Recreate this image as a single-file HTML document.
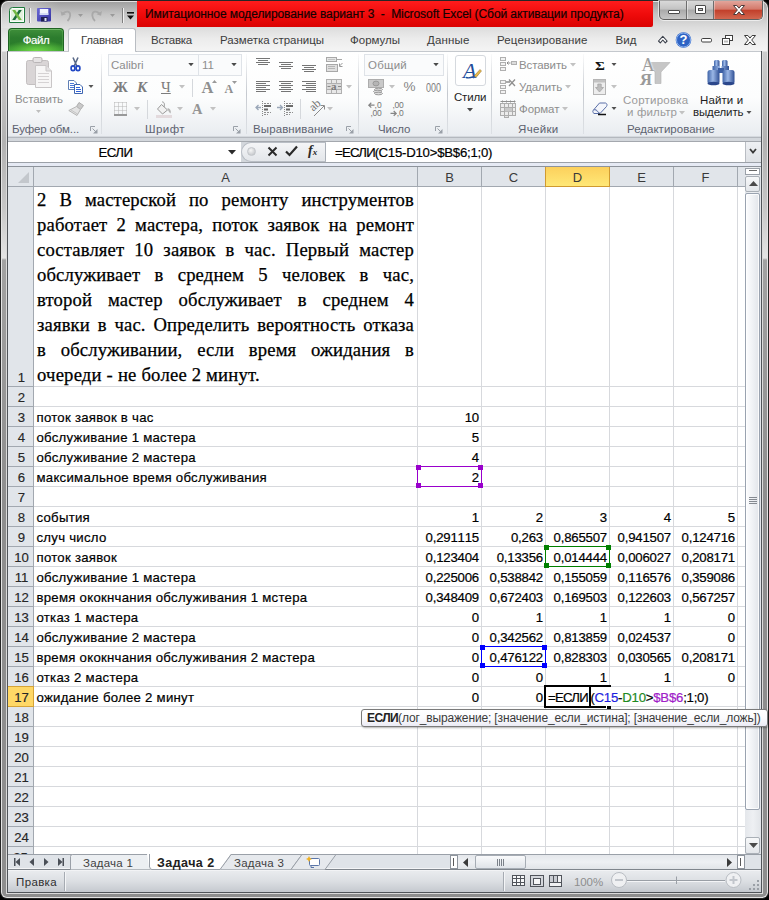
<!DOCTYPE html><html><head><meta charset="utf-8"><title>Excel</title><style>*{box-sizing:border-box;margin:0;padding:0}
html,body{width:769px;height:900px;overflow:hidden;background:#000}
body{position:relative;font-family:"Liberation Sans",sans-serif;font-size:12px;color:#1e1e1e}
.a{position:absolute}
.t{position:absolute;white-space:nowrap;line-height:14px}
svg{position:absolute;overflow:visible}
#red{left:137px;top:1px;width:516px;height:26px;border-radius:0 0 2px 0;background:linear-gradient(180deg,#ff1c1c 0,#ee0a0a 55%,#da0202 100%)}
#ribbon{left:8px;top:51px;width:753px;height:86px;background:linear-gradient(180deg,#ffffff 0,#fcfdfd 55%,#e9ecf0 100%);border-bottom:1px solid #d5d9de}
.tab{top:33px;font-size:11.500px;color:#3c3c3c}
.gl{top:122px;font-size:11.500px;color:#5d6270;text-align:center}
.gs{top:54px;width:1px;height:80px;background:linear-gradient(180deg,rgba(200,204,210,.1),#c5c9cf 50%,rgba(200,204,210,.4))}
.dis{color:#8d8d8d}

#win{left:0;top:0;width:769px;height:899px;border-radius:8px 8px 7px 7px;background:#262626;overflow:hidden}
#f1{left:1px;top:1px;width:767px;height:897px;border-radius:7px 7px 6px 6px;background:#e4e4e4}
#f2{left:2px;top:2px;width:765px;height:895px;border-radius:6px 6px 5px 5px;background:linear-gradient(180deg,#a0a0a0 0,#c4c4c4 12px,#dcdcdc 25px,#ececec 37px,#f4f4f4 49px,#cdcdcd 50px,#b2b2b2 140px,#c6c6c6 205px,#e4e4e4 256px,#a2a2a2 258px,#8e8e8e 500px,#8e8e8e 100%)}
#f3{left:6px;top:52px;width:757px;height:842px;background:#dadada}
#f4{left:7px;top:51px;width:755px;height:842px;background:#505459}
#title{left:2px;top:2px;width:765px;height:26px;border-radius:6px 6px 0 0;background:transparent}
#tabs{left:8px;top:28px;width:753px;height:23px;background:transparent}

#fbar{left:8px;top:137px;width:753px;height:30px;background:#d3d7dc}
.hdr{background:#e1e5ea}
.ct{position:absolute;white-space:nowrap;font-size:13.2px;line-height:20px;height:20px;color:#000;-webkit-text-stroke-width:.2px}
.cl{left:36.500px;letter-spacing:.26px}
.cr{text-align:right;letter-spacing:-.2px;font-kerning:none}
.rh{position:absolute;left:9px;width:25px;text-align:center;font-size:13.2px;line-height:20px;color:#262626;-webkit-text-stroke-width:.15px}
.chd{position:absolute;top:168px;height:19px;line-height:19px;text-align:center;font-size:13px;color:#3a3a3a}
.gv{position:absolute;top:187px;width:1px;height:667px;background:#d7d9dd}
.gh{position:absolute;left:34px;width:711px;height:1px;background:#d7d9dd}
#a1{position:absolute;left:37px;top:187px;width:377px;font:18.67px/25px "Liberation Serif",serif;color:#000;text-align:justify;-webkit-text-stroke-width:.25px}
#a1 div{text-align:justify;text-align-last:justify;white-space:nowrap;height:25px;letter-spacing:.14px}
</style></head><body><div id="win" class="a"><div id="f1" class="a"></div><div id="f2" class="a"></div><div id="f3" class="a"></div><div id="f4" class="a"></div><div id="title" class="a"></div>
<div class="a" style="left:1px;top:1px;width:60px;height:27px;border-radius:7px 0 0 0;background:linear-gradient(90deg,rgba(255,255,255,.12),rgba(255,255,255,.3) 30%,rgba(255,255,255,0))"></div>
<!-- excel icon -->
<svg style="left:9px;top:7px" width="16" height="16" viewBox="0 0 16 16"><path d="M3.500 .5 H15.500 V15.500 H.5 V3.500 Q.5 .5 3.500 .5Z" fill="#fbfefb" stroke="#1f7a3c"/><rect x="2" y="2" width="12" height="12" fill="#e3f2de"/><path d="M9.800 3 L12.800 3 L6.200 13 L3.200 13 Z" fill="#1c6b3a"/><path d="M3.200 3 L6.200 3 L12.800 13 L9.800 13 Z" fill="#74b843"/></svg>
<div class="a" style="left:29px;top:8px;width:1px;height:15px;background:#8f8f8f"></div><div class="a" style="left:30px;top:8px;width:1px;height:15px;background:#f4f4f4"></div>
<!-- save -->
<svg style="left:37px;top:8px" width="14" height="14" viewBox="0 0 14 14"><defs><linearGradient id="sv" x1="0" x2="1" y1="0" y2="1"><stop offset="0" stop-color="#6c6ad6"/><stop offset="1" stop-color="#3432a0"/></linearGradient></defs><rect x="0" y="0" width="14" height="13.500" rx="1" fill="url(#sv)"/><rect x="2.800" y="1" width="8.500" height="6" fill="#f2f5fd"/><rect x="2.800" y="5" width="8.500" height="2" fill="#d5dcf6"/><rect x="4" y="9" width="6.500" height="4.500" fill="#1e1e52"/><rect x="7.500" y="10" width="2" height="3" fill="#dfe2f2"/></svg>
<!-- undo redo -->
<svg style="left:60px;top:7px" width="60" height="16" viewBox="0 0 60 16" fill="none" stroke="#a9a9a9" stroke-width="1.8"><path d="M3 6.5 C6 3.5 10.5 4 10.2 8.5 C10 11 9 12.5 7.5 14"/><path d="M0.5 4 L1.5 8.8 L6 7.2 Z" fill="#a9a9a9" stroke="none"/><path d="M18 7 h5 l-2.5 3z" fill="#9a9a9a" stroke="none"/><path d="M39.5 6.5 C36.5 3.5 32 4 32.3 8.5 C32.5 11 33.5 12.5 35 14"/><path d="M42 4 L41 8.8 L36.5 7.2 Z" fill="#a9a9a9" stroke="none"/><path d="M50 7 h5 l-2.5 3z" fill="#9a9a9a" stroke="none"/></svg>
<div class="a" style="left:122px;top:8px;width:1px;height:15px;background:#7f7f7f"></div><div class="a" style="left:123px;top:8px;width:1px;height:15px;background:#f0f0f0"></div>
<svg style="left:127px;top:12px" width="8" height="9" viewBox="0 0 8 9"><rect x="0" y="0" width="7" height="1.6" fill="#111"/><path d="M0 3.5 h7 l-3.5 4z" fill="#111"/></svg>
<div id="red" class="a"></div>
<div class="t" style="left:145px;top:7px;font-size:12px;color:#140202;letter-spacing:-.08px;-webkit-text-stroke-width:.2px">Имитационное моделирование вариант 3 &nbsp;- &nbsp;Microsoft Excel (Сбой активации продукта)</div>
<!-- window controls -->
<div class="a" style="left:659px;top:1px;width:104px;height:19px;border:1px solid #5f5f5f;border-top:none;border-radius:0 0 5px 5px;background:linear-gradient(180deg,#d9d9d9 0,#c3c3c3 45%,#a9a9a9 50%,#c6c6c6 100%);box-shadow:0 0 0 1px rgba(255,255,255,.6)"></div>
<div class="a" style="left:714px;top:1px;width:48px;height:18px;border-radius:0 0 4px 0;background:linear-gradient(180deg,#e2a59b 0,#d4796b 45%,#c2402b 52%,#d2674f 100%)"></div>
<div class="a" style="left:686px;top:1px;width:1px;height:18px;background:#6d6d6d"></div><div class="a" style="left:687px;top:1px;width:1px;height:18px;background:rgba(255,255,255,.45)"></div>
<div class="a" style="left:713px;top:1px;width:1px;height:18px;background:#6d6d6d"></div><div class="a" style="left:714px;top:1px;width:1px;height:18px;background:rgba(255,255,255,.35)"></div>
<svg style="left:659px;top:0" width="104" height="20" viewBox="0 0 104 20"><rect x="9.5" y="10.5" width="11" height="3" rx=".5" fill="#fff" stroke="#4a4a4a"/><rect x="36.500" y="5.500" width="10" height="8" rx=".5" fill="#fff" stroke="#4a4a4a"/><rect x="39.500" y="8.500" width="4" height="2" fill="#c3c3c3" stroke="#4a4a4a"/><path d="M74.500 5.500 h3.300 l2.200 2.700 l2.200 -2.700 h3.300 l-3.900 4.500 l3.900 4.500 h-3.300 l-2.200 -2.700 l-2.200 2.700 h-3.300 l3.900 -4.500z" fill="#fff" stroke="#4a3a3a" stroke-width="1"/></svg>
<!-- tabs row -->
<div id="tabs" class="a"></div>
<div class="a" style="left:8px;top:28px;width:56px;height:23px;border-radius:4px 4px 0 0;background:radial-gradient(ellipse 34px 11px at 50% 100%,rgba(120,225,75,.9),rgba(120,225,75,0)),linear-gradient(180deg,#3f8f3a 0,#2c7c2e 40%,#2a7d2a 70%,#35962f 100%);border:1px solid #1f6422;border-bottom:none;box-shadow:inset 0 1px 0 rgba(150,215,140,.55),inset 1px 0 0 rgba(110,190,100,.35),inset -1px 0 0 rgba(110,190,100,.35)"></div>
<div class="t" style="left:8px;top:33px;width:56px;text-align:center;color:#fff;font-size:11.500px;letter-spacing:-.5px;text-shadow:0 0 1px rgba(255,255,255,.5)">Файл</div>
<div class="a" style="left:68px;top:28px;width:68px;height:24px;border:1px solid #b9bdc2;border-bottom:none;border-radius:3px 3px 0 0;background:#fff"></div>
<div class="t tab" style="left:81px;letter-spacing:-0.25px">Главная</div>
<div class="t tab" style="left:151px;letter-spacing:-0.25px">Вставка</div>
<div class="t tab" style="left:220px;letter-spacing:-0.02px">Разметка страницы</div>
<div class="t tab" style="left:350px;letter-spacing:0px">Формулы</div>
<div class="t tab" style="left:427px;letter-spacing:0.16px">Данные</div>
<div class="t tab" style="left:497px;letter-spacing:0.12px">Рецензирование</div>
<div class="t tab" style="left:615.500px;letter-spacing:0.06px">Вид</div>
<svg style="left:657px;top:32px" width="100" height="16" viewBox="0 0 100 16"><path d="M1.500 9 L5.800 4.300 L10.100 9 L8.300 10.800 L5.800 8 L3.300 10.800 Z" fill="#fff" stroke="#3a3f4a" stroke-width="1.100" stroke-linejoin="round"/><circle cx="26.500" cy="8" r="7.800" fill="#2e63c4"/><circle cx="26.500" cy="8" r="7" fill="none" stroke="#8db2ee" stroke-width="1"/><rect x="44.500" y="6.500" width="10" height="3.500" rx="1.200" fill="#fff" stroke="#3f3f3f"/><rect x="68.500" y="3.500" width="7" height="5" fill="#fff" stroke="#3f3f3f"/><rect x="65.500" y="6.500" width="7" height="6" fill="#fff" stroke="#3f3f3f"/><rect x="67" y="8.500" width="4" height="2" fill="#bbb"/><path d="M87.500 3.500 h3.400 l2.100 2.600 l2.100 -2.600 h3.400 l-3.800 4.500 l3.800 4.500 h-3.400 l-2.100 -2.600 l-2.100 2.600 h-3.400 l3.800 -4.500z" fill="#fff" stroke="#3a3a3a" stroke-width="1"/></svg>
<div class="t" style="left:679px;top:32px;width:9px;text-align:center;color:#fff;font-weight:bold;font-size:13px;line-height:16px">?</div>
<div id="ribbon" class="a"></div>
<div class="a" style="left:8px;top:51px;width:753px;height:1px;background:#c4c8cd"></div>
<div class="a" style="left:136px;top:51px;width:1px;height:1px;background:#b9bdc2"></div>
<div class="a" style="left:69px;top:51px;width:66px;height:1px;background:#fff"></div>
<!-- group separators -->
<div class="a gs" style="left:101px"></div><div class="a gs" style="left:246px"></div><div class="a gs" style="left:358px"></div><div class="a gs" style="left:447px"></div><div class="a gs" style="left:491px"></div><div class="a gs" style="left:583px"></div>
<!-- group labels -->
<div class="t gl" style="letter-spacing:-0.13px;left:12px">Буфер обм...</div>
<div class="t gl" style="letter-spacing:0.43px;left:145px">Шрифт</div>
<div class="t gl" style="left:253px;letter-spacing:0.1px">Выравнивание</div>
<div class="t gl" style="letter-spacing:-0.18px;left:378px">Число</div>
<div class="t gl" style="letter-spacing:0.34px;left:518px">Ячейки</div>
<div class="t gl" style="left:627px;letter-spacing:0.01px">Редактирование</div>
<!-- dialog launchers -->
<svg style="left:90px;top:126px" width="8" height="8" viewBox="0 0 8 8"><path d="M.5 5 V.5 H5" fill="none" stroke="#9aa0a8"/><path d="M3 7.500 H7.500 V3 Z" fill="#9aa0a8"/><path d="M2.500 2.500 L6 6" stroke="#9aa0a8"/></svg>
<svg style="left:233px;top:126px" width="8" height="8" viewBox="0 0 8 8"><path d="M.5 5 V.5 H5" fill="none" stroke="#9aa0a8"/><path d="M3 7.500 H7.500 V3 Z" fill="#9aa0a8"/><path d="M2.500 2.500 L6 6" stroke="#9aa0a8"/></svg>
<svg style="left:346px;top:126px" width="8" height="8" viewBox="0 0 8 8"><path d="M.5 5 V.5 H5" fill="none" stroke="#9aa0a8"/><path d="M3 7.500 H7.500 V3 Z" fill="#9aa0a8"/><path d="M2.500 2.500 L6 6" stroke="#9aa0a8"/></svg>
<svg style="left:435px;top:126px" width="8" height="8" viewBox="0 0 8 8"><path d="M.5 5 V.5 H5" fill="none" stroke="#9aa0a8"/><path d="M3 7.500 H7.500 V3 Z" fill="#9aa0a8"/><path d="M2.500 2.500 L6 6" stroke="#9aa0a8"/></svg>

<!-- CLIPBOARD -->
<svg style="left:24px;top:56px" width="30" height="33" viewBox="0 0 30 33"><rect x="2.500" y="4.500" width="22" height="24" rx="2" fill="#d9d5d6" stroke="#c3bfc0"/><rect x="9" y="1.500" width="9" height="5" rx="1.500" fill="#e6e3e4" stroke="#b9b5b6"/><path d="M11.500 9.500 H22 L27.500 15 V31.500 H11.500 Z" fill="#f7f6f6" stroke="#c9c6c7"/><path d="M22 9.500 V15 H27.500" fill="#e4e2e3" stroke="#c9c6c7"/><path d="M14 17.500 H25 M14 20.500 H25 M14 23.500 H25 M14 26.500 H25" stroke="#d5d2d3"/></svg>
<div class="t dis" style="letter-spacing:-0.09px;left:15px;top:92px;font-size:11.500px">Вставить</div>
<svg style="left:36px;top:110px" width="5" height="3" viewBox="0 0 5 3"><path d="M0 0 H5 L2.500 3Z" fill="#bdbdbd"/></svg>
<!-- scissors -->
<svg style="left:70px;top:57px" width="11" height="15" viewBox="0 0 11 15"><path d="M3 .5 L6.800 9 M8 .5 L4.200 9" stroke="#5a6a88" stroke-width="1.600" fill="none"/><ellipse cx="3" cy="11.300" rx="1.900" ry="2.400" fill="none" stroke="#2349c4" stroke-width="1.700"/><ellipse cx="8" cy="11.300" rx="1.900" ry="2.400" fill="none" stroke="#2349c4" stroke-width="1.700"/></svg>
<!-- copy -->
<svg style="left:68px;top:80px" width="16" height="14" viewBox="0 0 16 14"><path d="M.5 .5 H6 L8.500 3 V9.500 H.5 Z" fill="#fff" stroke="#5f7fb5"/><path d="M2 3.500 H6 M2 5.500 H7 M2 7.500 H7" stroke="#4a78d8"/><path d="M6.500 4.500 H12 L14.500 7 V13.500 H6.500 Z" fill="#fff" stroke="#3f66b0"/><path d="M8 7.500 H12 M8 9.500 H13 M8 11.500 H13" stroke="#2f62d8"/></svg>
<svg style="left:88px;top:85px" width="6" height="4" viewBox="0 0 6 4"><path d="M.5 0 H5.500 L3 3Z" fill="#555"/></svg>
<!-- format painter -->
<svg style="left:68px;top:101px" width="17" height="16" viewBox="0 0 17 16"><path d="M11 1.500 L15.500 4.500 L12.500 8.500 L8.500 5.500 Z" fill="#c9c9c9" stroke="#adadad"/><path d="M8.500 5.500 L12.500 8.500 L9 14.500 L.8 9.500 Z" fill="#e3e3e3" stroke="#b5b5b5"/><path d="M3 9 L9.500 13" stroke="#c5c5c5"/></svg>

<!-- FONT -->
<div class="a" style="left:108px;top:54px;width:91px;height:22px;border:1px solid #dfe3e8;background:#fafbfc"></div>
<div class="a" style="left:198px;top:54px;width:44px;height:22px;border:1px solid #dfe3e8;background:#fafbfc"></div>
<div class="t dis" style="letter-spacing:0px;left:111px;top:58px;font-size:11.500px">Calibri</div>
<div class="t dis" style="letter-spacing:0px;left:202px;top:58px;font-size:11.500px">11</div>
<svg style="left:188px;top:63px" width="6" height="4" viewBox="0 0 6 4"><path d="M.3 0 H5.700 L3 3.200Z" fill="#4a4a4a"/></svg>
<svg style="left:231px;top:63px" width="6" height="4" viewBox="0 0 6 4"><path d="M.3 0 H5.700 L3 3.200Z" fill="#4a4a4a"/></svg>
<div class="t" style="left:113px;top:78px;font:bold 15px/18px 'Liberation Serif',serif;color:#7d7d7d">Ж</div>
<div class="t" style="left:137px;top:78px;font:italic bold 15px/18px 'Liberation Serif',serif;color:#7d7d7d">К</div>
<div class="t" style="left:161px;top:78px;font:15px/18px 'Liberation Serif',serif;color:#7d7d7d;text-decoration:underline">Ч</div>
<svg style="left:179px;top:85px" width="6" height="4" viewBox="0 0 6 4"><path d="M0 0 H6 L3 3.500Z" fill="#c2c2c2"/></svg>
<div class="a" style="left:192px;top:79px;width:1px;height:18px;background:#d5d8dc"></div>
<div class="t" style="left:201.500px;top:77px;font:bold 16.500px/22px 'Liberation Serif',serif;color:#8f8f8f">A</div>
<svg style="left:212px;top:80px" width="5" height="3" viewBox="0 0 5 3"><path d="M0 3 H5 L2.500 0Z" fill="#9a9a9a"/></svg>
<div class="t" style="left:224.500px;top:80px;font:bold 12px/18px 'Liberation Serif',serif;color:#8f8f8f">A</div>
<svg style="left:232px;top:81px" width="5" height="3" viewBox="0 0 5 3"><path d="M0 0 H5 L2.500 3Z" fill="#9a9a9a"/></svg>
<!-- borders -->
<svg style="left:114px;top:102px" width="14" height="14" viewBox="0 0 14 14"><path d="M.5 .5 H13 M.5 4.500 H13 M.5 8.500 H13 M.5 .5 V12 M4.500 .5 V12 M8.500 .5 V12 M12.500 .5 V12" stroke="#b5b5b5" stroke-dasharray="1 1" fill="none"/><path d="M0 13 H13" stroke="#7a7a7a" stroke-width="1.400"/></svg>
<svg style="left:134px;top:107px" width="6" height="4" viewBox="0 0 6 4"><path d="M0 0 H6 L3 3.500Z" fill="#c2c2c2"/></svg>
<div class="a" style="left:147px;top:100px;width:1px;height:19px;background:#d5d8dc"></div>
<!-- fill bucket -->
<svg style="left:156px;top:101px" width="17" height="17" viewBox="0 0 17 17"><path d="M5.500 3.500 L11.500 9 L6.500 13 L1.500 8 Z" fill="#f1f1f1" stroke="#9a9a9a"/><path d="M6 1 C8 .5 9 3 8 6" fill="none" stroke="#9a9a9a"/><path d="M11.500 7 C14 7.500 15.500 10 14.500 12.500 C13 11 12 10 11.500 7Z" fill="#b5b5b5"/><rect x="0" y="14" width="16" height="3" fill="#e3dadd"/></svg>
<svg style="left:177px;top:107px" width="6" height="4" viewBox="0 0 6 4"><path d="M0 0 H6 L3 3.500Z" fill="#c2c2c2"/></svg>
<div class="t" style="left:192px;top:98px;font:bold 14.500px/22px 'Liberation Serif',serif;color:#959595">A</div>
<svg style="left:210px;top:107px" width="6" height="4" viewBox="0 0 6 4"><path d="M0 0 H6 L3 3.500Z" fill="#c2c2c2"/></svg>

<!-- ALIGNMENT -->
<svg style="left:255px;top:55px" width="100" height="66" viewBox="0 0 100 66" stroke="#757575" fill="none">
<path d="M1 3.5 H15 M3 5.5 H13 M1 7.5 H15 M3 9.5 H13 "/>
<path d="M24 7.5 H38 M26 9.5 H36 M24 11.5 H38 M26 13.5 H36 "/>
<path d="M47 10.5 H61 M49 12.5 H59 M47 14.5 H61 M49 16.5 H59 "/>
<path d="M1 26.5 H15 M1 28.5 H11 M1 30.5 H15 M1 32.5 H11 M1 34.5 H15 M1 36.5 H11 "/>
<path d="M24 26.5 H38 M26 28.5 H36 M24 30.5 H38 M26 32.5 H36 M24 34.5 H38 M26 36.5 H36 "/>
<path d="M47 26.5 H61 M51 28.5 H61 M47 30.5 H61 M51 32.5 H61 M47 34.5 H61 M51 36.5 H61 "/>
<g stroke="#a8a8a8"><rect x="71.500" y="2.500" width="10" height="4" fill="#e6e6e6"/><path d="M73 4.500 H80" stroke="#c4c4c4"/><path d="M82 4.500 H87"/><path d="M87.500 8 L84.500 11 M84.500 8.500 V11.500 H87.500" stroke="#9a9a9a"/><rect x="71.500" y="9.500" width="11" height="7" fill="#e0e0e0"/><path d="M73 11.500 H80 M73 13.500 H80" stroke="#b5b5b5"/></g>
<g stroke="#b0b0b0"><rect x="71.500" y="24.500" width="15" height="14" fill="#e8e8e8"/><path d="M71.500 28.500 H86.500 M71.500 34.500 H86.500 M76.500 24.500 V28.500 M81.500 24.500 V28.500 M76.500 34.500 V38.500 M81.500 34.500 V38.500"/><rect x="72" y="29" width="14" height="5" fill="#d9d9d9" stroke="none"/><path d="M72.500 31.500 H75.500 M83 31.500 H86" stroke="#8a8a8a"/></g>
<g><path d="M7.500 46 V61" stroke="#8a8a8a" stroke-dasharray="1 1"/><path d="M9 48.500 H16 M9 57.500 H16 M9 59.500 H13" stroke="#8f8f8f" stroke-dasharray="2 1"/><path d="M9 51 H16 M9 54.500 H13" stroke="#6a6a6a" stroke-width="2"/><path d="M1 52.500 H6 M3.500 50 L1 52.500 L3.500 55" stroke="#9aa7b8" stroke-width="1.300"/></g>
<g><path d="M29.500 46 V61" stroke="#8a8a8a" stroke-dasharray="1 1"/><path d="M31 48.500 H38 M31 57.500 H38 M31 59.500 H35" stroke="#8f8f8f" stroke-dasharray="2 1"/><path d="M31 51 H38 M31 54.500 H35" stroke="#6a6a6a" stroke-width="2"/><path d="M22 52.500 H27.500 M25 50 L27.500 52.500 L25 55" stroke="#9aa7b8" stroke-width="1.300"/></g>
<path d="M59 61 L69 51 M65.500 50.500 H69.500 V54.500" stroke="#8a8a8a"/>
</svg>
<div class="t" style="left:309px;top:98px;font:12px/14px 'Liberation Serif',serif;color:#707070;transform:rotate(-42deg);transform-origin:50% 50%">ab</div>
<svg style="left:346px;top:85px" width="6" height="4" viewBox="0 0 6 4"><path d="M0 0 H6 L3 3.500Z" fill="#c2c2c2"/></svg>
<div class="t" style="left:331px;top:79px;font:bold 11px/14px 'Liberation Serif',serif;color:#7a7a7a">a</div>
<div class="a" style="left:300px;top:99px;width:1px;height:20px;background:#d5d8dc"></div>
<svg style="left:327px;top:107px" width="6" height="4" viewBox="0 0 6 4"><path d="M0 0 H6 L3 3.500Z" fill="#c2c2c2"/></svg>

<!-- NUMBER -->
<div class="a" style="left:364px;top:54px;width:80px;height:22px;border:1px solid #dfe3e8;background:#fafbfc"></div>
<div class="t dis" style="letter-spacing:0.23px;left:368px;top:58px;font-size:11.500px">Общий</div>
<svg style="left:433px;top:63px" width="6" height="4" viewBox="0 0 6 4"><path d="M.3 0 H5.700 L3 3.200Z" fill="#4a4a4a"/></svg>
<svg style="left:368px;top:79px" width="17" height="17" viewBox="0 0 17 17"><rect x=".5" y=".5" width="15" height="8" fill="#c9c9c9" stroke="#adadad"/><ellipse cx="8" cy="4.500" rx="3" ry="2.400" fill="#b5b5b5" stroke="#9a9a9a"/><ellipse cx="10.500" cy="10.500" rx="4" ry="1.300" fill="#dcdcdc" stroke="#9a9a9a"/><ellipse cx="9.500" cy="12.500" rx="4" ry="1.300" fill="#dcdcdc" stroke="#9a9a9a"/><ellipse cx="10.500" cy="14.500" rx="4" ry="1.300" fill="#dcdcdc" stroke="#9a9a9a"/></svg>
<svg style="left:389px;top:85px" width="6" height="4" viewBox="0 0 6 4"><path d="M0 0 H6 L3 3.500Z" fill="#c2c2c2"/></svg>
<div class="t" style="left:403.500px;top:79px;font-size:13.500px;line-height:16px;color:#858585">%</div>
<div class="t" style="left:425.500px;top:79.500px;font-size:12.500px;line-height:16px;color:#808080;transform:scaleX(.72);transform-origin:0 0">000</div>
<svg style="left:368px;top:101px" width="40" height="17" viewBox="0 0 40 17" font-family="Liberation Sans, sans-serif" font-size="8.500" fill="#757575"><path d="M.8 4.200 H6.500 M3.300 1.800 L.8 4.200 L3.300 6.600" fill="none" stroke="#858585" stroke-width="1.200"/><text x="6.600" y="7.200">,0</text><text x="2.500" y="15.400" letter-spacing="-.3">,00</text><text x="24.500" y="7.200" letter-spacing="-.3">,00</text><path d="M22.500 12.400 H28.200 M25.700 10 L28.200 12.400 L25.700 14.800" fill="none" stroke="#858585" stroke-width="1.200"/><text x="28.700" y="15.400">,0</text></svg>

<!-- STYLES -->
<div class="a" style="left:455px;top:55px;width:31px;height:31px;border:1px solid #d5d9de;border-radius:3px;background:#fff"></div>
<div class="t" style="left:463px;top:59px;font:italic 22px/24px 'Liberation Serif',serif;color:#1f4c9a">A</div>
<svg style="left:466px;top:68px" width="16" height="12" viewBox="0 0 16 12"><path d="M0 9.500 C4 10.500 8 9 12 6.500" stroke="#1f4c9a" stroke-width="1.300" fill="none"/><path d="M8 8 L14 1.500 L15.500 3 L10 9.500 Z" fill="#e8b84a" stroke="#8a6a2a" stroke-width=".5"/><path d="M8 8 L10 9.500 L7 10.500Z" fill="#3a63b0"/></svg>
<div class="t" style="left:454px;top:90px;font-size:11.500px;color:#1e1e1e;letter-spacing:-0.19px">Стили</div>
<svg style="left:467px;top:108px" width="6" height="4" viewBox="0 0 6 4"><path d="M0 0 H6 L3 3.500Z" fill="#4a4a4a"/></svg>

<!-- CELLS -->
<svg style="left:500px;top:57px" width="17" height="16" viewBox="0 0 17 16" fill="#f2f2f2" stroke="#b0b0b0"><rect x=".5" y=".5" width="5" height="3"/><rect x=".5" y="5.500" width="5" height="3"/><rect x=".5" y="10.500" width="5" height="3"/><rect x="11.500" y="4.500" width="5" height="3" fill="#dcdcdc"/><path d="M7 6 H10.500 M8.500 4.500 L7 6 L8.500 7.500" fill="none" stroke="#8a8a8a"/></svg>
<svg style="left:500px;top:79px" width="17" height="16" viewBox="0 0 17 16" fill="#f2f2f2" stroke="#b0b0b0"><rect x=".5" y="1.500" width="5" height="3"/><rect x=".5" y="6.500" width="5" height="3"/><rect x=".5" y="11.500" width="5" height="3"/><path d="M6 3 H10 M9 .5 L15 7 M15 .5 L9 7" fill="none" stroke="#8f8f8f" stroke-width="1.300"/></svg>
<svg style="left:500px;top:100px" width="17" height="18" viewBox="0 0 17 18" fill="#ececec" stroke="#adadad"><rect x=".5" y="3.500" width="15" height="12"/><path d="M.5 7.500 H15.500 M.5 11.500 H15.500 M4.500 3.500 V15.500 M8.500 3.500 V15.500 M12.500 3.500 V15.500" fill="none"/><rect x="5" y="8" width="7" height="3.500" fill="#c9c9c9" stroke="none"/><path d="M.5 1.500 H15.500 M2.500 .5 V2.500 M6.500 .5 V2.500 M10.500 .5 V2.500 M14.500 .5 V2.500" fill="none" stroke="#8f8f8f"/><rect x="4.500" y="15.500" width="4" height="2" fill="#e3e3e3"/></svg>
<div class="t dis" style="letter-spacing:-0.09px;left:519px;top:58px;font-size:11.500px">Вставить</div>
<div class="t dis" style="left:519px;top:80px;font-size:11.500px;letter-spacing:-0.13px">Удалить</div>
<div class="t dis" style="left:519px;top:101.500px;font-size:11.500px;letter-spacing:-0.08px">Формат</div>
<svg style="left:570px;top:63px" width="6" height="4" viewBox="0 0 6 4"><path d="M0 0 H6 L3 3.500Z" fill="#c2c2c2"/></svg>
<svg style="left:565px;top:85px" width="6" height="4" viewBox="0 0 6 4"><path d="M0 0 H6 L3 3.500Z" fill="#c2c2c2"/></svg>
<svg style="left:562px;top:107px" width="6" height="4" viewBox="0 0 6 4"><path d="M0 0 H6 L3 3.500Z" fill="#c2c2c2"/></svg>

<!-- EDITING -->
<div class="t" style="left:594.500px;top:56.500px;font:bold 13.500px/18px 'Liberation Serif',serif;color:#111;transform:scaleX(1.12);transform-origin:0 0">&#931;</div>
<svg style="left:611px;top:63px" width="6" height="4" viewBox="0 0 6 4"><path d="M.5 0 H5.500 L3 3Z" fill="#505050"/></svg>
<svg style="left:593px;top:79px" width="14" height="17" viewBox="0 0 14 17"><rect x=".5" y=".5" width="12" height="15" fill="#ededed" stroke="#b5b5b5"/><rect x="1" y="1" width="11" height="2.500" fill="#c2c2c2"/><path d="M4.800 5 H8.200 V8.500 H10.500 L6.500 13 L2.500 8.500 H4.800 Z" fill="#bdbdbd" stroke="#a0a0a0" stroke-width=".7"/></svg>
<svg style="left:611px;top:85px" width="6" height="4" viewBox="0 0 6 4"><path d="M0 0 H6 L3 3.500Z" fill="#c2c2c2"/></svg>
<svg style="left:592px;top:102px" width="17" height="14" viewBox="0 0 17 14"><path d="M7.500 1 L13.500 1 C15 1.500 15.500 3 14.500 4.500 L8 11.500 L2 11.500 C.5 10.500 .5 9 1.500 8 Z" fill="#f4f6fb" stroke="#5a6fa8"/><path d="M1.500 8 C3 7 5 8 5.500 9.500 L8 11.500" fill="#cfd8ee" stroke="#5a6fa8"/><path d="M6 12.500 H14" stroke="#111" stroke-width="1.300"/></svg>
<svg style="left:611px;top:107px" width="6" height="4" viewBox="0 0 6 4"><path d="M.5 0 H5.500 L3 3Z" fill="#505050"/></svg>
<!-- sort & filter -->
<svg style="left:646px;top:62px" width="25" height="23" viewBox="0 0 25 23"><path d="M0 .5 H24 L15 10 V21.500 H9 V10 Z" fill="#c6c6c6" stroke="#b2b2b2" stroke-width=".6"/></svg>
<div class="t" style="left:641.500px;top:55px;font:18px/20px 'Liberation Serif',serif;color:#9d9d9d;text-shadow:0 0 2px #fff,0 0 2px #fff">A</div>
<div class="t" style="left:640px;top:69.500px;font:bold 16.500px/20px 'Liberation Serif',serif;color:#9a9a9a;text-shadow:0 0 2px #fff,0 0 2px #fff">Я</div>
<div class="t dis" style="left:623px;top:92.500px;font-size:11.500px;color:#9a9a9a;letter-spacing:0.23px">Сортировка</div>
<div class="t dis" style="left:627px;top:104.500px;font-size:11.500px;color:#9a9a9a;letter-spacing:0.15px">и фильтр</div>
<svg style="left:679px;top:111px" width="6" height="4" viewBox="0 0 6 4"><path d="M0 0 H6 L3 3.500Z" fill="#c2c2c2"/></svg>
<!-- binoculars -->
<svg style="left:706px;top:59px" width="30" height="27" viewBox="0 0 30 27"><defs><linearGradient id="bn" x1="0" x2="1"><stop offset="0" stop-color="#3f64a8"/><stop offset=".45" stop-color="#9bb7e6"/><stop offset="1" stop-color="#2f4f94"/></linearGradient></defs><rect x="8" y="1" width="5.500" height="7" rx="1.500" fill="url(#bn)"/><rect x="16" y="1" width="5.500" height="7" rx="1.500" fill="url(#bn)"/><path d="M6.500 7 H14 V12 H6.500Z M15.500 7 H23 V12 H15.500Z" fill="url(#bn)"/><rect x="12" y="9" width="6" height="5" fill="#3c5fa4"/><rect x="1.500" y="11" width="12" height="14" rx="2.500" fill="url(#bn)"/><rect x="16.500" y="11" width="12" height="14" rx="2.500" fill="url(#bn)"/><ellipse cx="7.500" cy="24.500" rx="6" ry="1.800" fill="#2a468a"/><ellipse cx="22.500" cy="24.500" rx="6" ry="1.800" fill="#2a468a"/></svg>
<div class="t" style="left:700px;top:92.500px;font-size:11.500px;color:#1e1e1e;letter-spacing:0.12px">Найти и</div>
<div class="t" style="left:693px;top:104.500px;font-size:11.500px;color:#1e1e1e;letter-spacing:-0.14px">выделить</div>
<svg style="left:746px;top:111px" width="6" height="4" viewBox="0 0 6 4"><path d="M.5 0 H5.500 L3 3Z" fill="#505050"/></svg>
<div id="fbar" class="a"></div>
<div class="a" style="left:8px;top:137px;width:753px;height:1px;background:#b4b8be"></div>
<div class="a" style="left:8px;top:142px;width:233px;height:20px;background:#fff"></div>
<div class="a" style="left:8px;top:141px;width:753px;height:1px;background:#a4a8ae"></div>
<div class="a" style="left:8px;top:162px;width:753px;height:1px;background:#9ca1a8"></div>
<div class="a" style="left:8px;top:163px;width:753px;height:3px;background:#e6eaf4"></div>
<div class="a" style="left:8px;top:166px;width:753px;height:1px;background:#8d939b"></div>
<div class="t" style="left:9px;top:145px;width:213px;text-align:center;font-size:13.2px;line-height:16px;color:#000;letter-spacing:-.5px;-webkit-text-stroke-width:.2px">ЕСЛИ</div>
<svg style="left:228px;top:150px" width="8" height="5" viewBox="0 0 8 5"><path d="M0 0 H8 L4 4.500Z" fill="#2a2a2a"/></svg>
<div class="a" style="left:241px;top:142px;width:85px;height:20px;border-radius:10px 0 0 10px;background:linear-gradient(180deg,#f4f5f7,#e3e6ea);border:1px solid #b9bec5;border-right:1px solid #aab0b8"></div>
<div class="a" style="left:247px;top:147px;width:9px;height:9px;border-radius:5px;background:radial-gradient(circle at 40% 35%,#f6f6f6,#b9bcc1);border:1px solid #c3c6cb"></div>
<svg style="left:267px;top:146px" width="11" height="11" viewBox="0 0 11 11"><path d="M1.500 1.500 L9.500 9.500 M9.500 1.500 L1.500 9.500" stroke="#2a2a2a" stroke-width="2" fill="none"/></svg>
<svg style="left:285px;top:145px" width="13" height="12" viewBox="0 0 13 12"><path d="M1 6.500 L4.500 10 L12 1.500" stroke="#2a2a2a" stroke-width="2.200" fill="none"/></svg>
<div class="t" style="left:308px;top:142px;font:italic bold 14px/18px 'Liberation Serif',serif;color:#2a2a2a">f<span style="font-size:9px">x</span></div>
<div class="a" style="left:326px;top:142px;width:419px;height:20px;background:#fff"></div>
<div class="t" style="left:335px;top:145px;font-size:13.2px;line-height:16px;color:#000;letter-spacing:-.23px;-webkit-text-stroke-width:.2px"><span style="letter-spacing:-.77px">=ЕСЛИ(</span>C15-D10&gt;$B$6;1;0)</div>
<div class="a" style="left:745px;top:142px;width:16px;height:20px;background:linear-gradient(180deg,#eef0f3,#dfe2e6);border-left:1px solid #b9bdc3"></div>
<svg style="left:749px;top:148px" width="8" height="7" viewBox="0 0 8 7"><path d="M1 1 L4 4.500 L7 1" stroke="#3a3a3a" stroke-width="1.800" fill="none"/></svg>
<div class="a" style="left:8px;top:167px;width:737px;height:687px;background:#fff"></div>
<div class="a hdr" style="left:8px;top:167px;width:737px;height:19px"></div>
<div class="a" style="left:8px;top:186px;width:737px;height:1px;background:#a2a8b0"></div>
<div class="a hdr" style="left:8px;top:187px;width:25px;height:667px"></div>
<div class="a" style="left:33px;top:167px;width:1px;height:687px;background:#a2a8b0"></div>
<svg style="left:18px;top:172px" width="12" height="12" viewBox="0 0 12 12"><path d="M11 0 V11 H0 Z" fill="#c3c7cc"/></svg>
<div class="a" style="left:545px;top:167px;width:65px;height:20px;background:linear-gradient(180deg,#fcd05c,#ffe877);border:1px solid #d09a30;border-top:none"></div>
<div class="chd" style="left:34px;width:383px">A</div>
<div class="chd" style="left:418px;width:63px">B</div>
<div class="chd" style="left:482px;width:63px">C</div>
<div class="chd" style="left:546px;width:63px">D</div>
<div class="chd" style="left:610px;width:63px">E</div>
<div class="chd" style="left:674px;width:63px">F</div>
<div class="a" style="left:417px;top:167px;width:1px;height:19px;background:#a2a8b0"></div>
<div class="gv" style="left:417px"></div>
<div class="a" style="left:481px;top:167px;width:1px;height:19px;background:#a2a8b0"></div>
<div class="gv" style="left:481px"></div>
<div class="a" style="left:545px;top:167px;width:1px;height:19px;background:#d09a30"></div>
<div class="gv" style="left:545px"></div>
<div class="a" style="left:609px;top:167px;width:1px;height:19px;background:#d09a30"></div>
<div class="gv" style="left:609px"></div>
<div class="a" style="left:673px;top:167px;width:1px;height:19px;background:#a2a8b0"></div>
<div class="gv" style="left:673px"></div>
<div class="a" style="left:737px;top:167px;width:1px;height:19px;background:#a2a8b0"></div>
<div class="gv" style="left:737px"></div>
<div class="gh" style="top:386px"></div>
<div class="a" style="left:8px;top:386px;width:25px;height:1px;background:#a2a8b0"></div>
<div class="gh" style="top:406px"></div>
<div class="a" style="left:8px;top:406px;width:25px;height:1px;background:#a2a8b0"></div>
<div class="gh" style="top:426px"></div>
<div class="a" style="left:8px;top:426px;width:25px;height:1px;background:#a2a8b0"></div>
<div class="gh" style="top:446px"></div>
<div class="a" style="left:8px;top:446px;width:25px;height:1px;background:#a2a8b0"></div>
<div class="gh" style="top:466px"></div>
<div class="a" style="left:8px;top:466px;width:25px;height:1px;background:#a2a8b0"></div>
<div class="gh" style="top:486px"></div>
<div class="a" style="left:8px;top:486px;width:25px;height:1px;background:#a2a8b0"></div>
<div class="gh" style="top:506px"></div>
<div class="a" style="left:8px;top:506px;width:25px;height:1px;background:#a2a8b0"></div>
<div class="gh" style="top:526px"></div>
<div class="a" style="left:8px;top:526px;width:25px;height:1px;background:#a2a8b0"></div>
<div class="gh" style="top:546px"></div>
<div class="a" style="left:8px;top:546px;width:25px;height:1px;background:#a2a8b0"></div>
<div class="gh" style="top:566px"></div>
<div class="a" style="left:8px;top:566px;width:25px;height:1px;background:#a2a8b0"></div>
<div class="gh" style="top:586px"></div>
<div class="a" style="left:8px;top:586px;width:25px;height:1px;background:#a2a8b0"></div>
<div class="gh" style="top:606px"></div>
<div class="a" style="left:8px;top:606px;width:25px;height:1px;background:#a2a8b0"></div>
<div class="gh" style="top:626px"></div>
<div class="a" style="left:8px;top:626px;width:25px;height:1px;background:#a2a8b0"></div>
<div class="gh" style="top:646px"></div>
<div class="a" style="left:8px;top:646px;width:25px;height:1px;background:#a2a8b0"></div>
<div class="gh" style="top:666px"></div>
<div class="a" style="left:8px;top:666px;width:25px;height:1px;background:#a2a8b0"></div>
<div class="gh" style="top:686px"></div>
<div class="a" style="left:8px;top:686px;width:25px;height:1px;background:#a2a8b0"></div>
<div class="gh" style="top:706px"></div>
<div class="a" style="left:8px;top:706px;width:25px;height:1px;background:#a2a8b0"></div>
<div class="gh" style="top:726px"></div>
<div class="a" style="left:8px;top:726px;width:25px;height:1px;background:#a2a8b0"></div>
<div class="gh" style="top:746px"></div>
<div class="a" style="left:8px;top:746px;width:25px;height:1px;background:#a2a8b0"></div>
<div class="gh" style="top:766px"></div>
<div class="a" style="left:8px;top:766px;width:25px;height:1px;background:#a2a8b0"></div>
<div class="gh" style="top:786px"></div>
<div class="a" style="left:8px;top:786px;width:25px;height:1px;background:#a2a8b0"></div>
<div class="gh" style="top:806px"></div>
<div class="a" style="left:8px;top:806px;width:25px;height:1px;background:#a2a8b0"></div>
<div class="gh" style="top:826px"></div>
<div class="a" style="left:8px;top:826px;width:25px;height:1px;background:#a2a8b0"></div>
<div class="gh" style="top:846px"></div>
<div class="a" style="left:8px;top:846px;width:25px;height:1px;background:#a2a8b0"></div>
<div class="a" style="left:8px;top:686px;width:26px;height:21px;background:#ffd866;border:1px solid #d6a437;border-left:none"></div>
<div class="rh" style="top:368px">1</div>
<div class="rh" style="top:388px">2</div>
<div class="rh" style="top:408px">3</div>
<div class="rh" style="top:428px">4</div>
<div class="rh" style="top:448px">5</div>
<div class="rh" style="top:468px">6</div>
<div class="rh" style="top:488px">7</div>
<div class="rh" style="top:508px">8</div>
<div class="rh" style="top:528px">9</div>
<div class="rh" style="top:548px">10</div>
<div class="rh" style="top:568px">11</div>
<div class="rh" style="top:588px">12</div>
<div class="rh" style="top:608px">13</div>
<div class="rh" style="top:628px">14</div>
<div class="rh" style="top:648px">15</div>
<div class="rh" style="top:668px">16</div>
<div class="rh" style="top:688px">17</div>
<div class="rh" style="top:708px">18</div>
<div class="rh" style="top:728px">19</div>
<div class="rh" style="top:748px">20</div>
<div class="rh" style="top:768px">21</div>
<div class="rh" style="top:788px">22</div>
<div class="rh" style="top:808px">23</div>
<div class="rh" style="top:828px">24</div>
<div class="a" style="left:8px;top:847px;width:25px;height:7px;overflow:hidden"><div class="rh" style="left:0;top:1px">25</div></div>
<div id="a1"><div>2 В мастерской по ремонту инструментов</div><div>работает 2 мастера, поток заявок на ремонт</div><div>составляет 10 заявок в час. Первый мастер</div><div>обслуживает в среднем 5 человек в час,</div><div>второй мастер обслуживает в среднем 4</div><div>заявки в час. Определить вероятность отказа</div><div>в обслуживании, если время ожидания в</div><div style="text-align:left;text-align-last:left;letter-spacing:.2px">очереди - не более 2 минут.</div></div>
<div class="ct cl" style="top:408px">поток заявок в час</div>
<div class="ct cl" style="top:428px">обслуживание 1 мастера</div>
<div class="ct cl" style="top:448px">обслуживание 2 мастера</div>
<div class="ct cl" style="top:468px">максимальное время обслуживания</div>
<div class="ct cl" style="top:508px">события</div>
<div class="ct cl" style="top:528px">случ число</div>
<div class="ct cl" style="top:548px">поток заявок</div>
<div class="ct cl" style="top:568px">обслуживание 1 мастера</div>
<div class="ct cl" style="top:588px">время ококнчания обслуживания 1 мстера</div>
<div class="ct cl" style="top:608px">отказ 1 мастера</div>
<div class="ct cl" style="top:628px">обслуживание 2 мастера</div>
<div class="ct cl" style="top:648px">время ококнчания обслуживания 2 мастера</div>
<div class="ct cl" style="top:668px">отказ 2 мастера</div>
<div class="ct cl" style="top:688px">ожидание более 2 минут</div>
<div class="ct cr" style="top:408px;left:418px;width:61px">10</div>
<div class="ct cr" style="top:428px;left:418px;width:61px">5</div>
<div class="ct cr" style="top:448px;left:418px;width:61px">4</div>
<div class="ct cr" style="top:468px;left:418px;width:61px">2</div>
<div class="ct cr" style="top:508px;left:418px;width:61px">1</div>
<div class="ct cr" style="top:508px;left:482px;width:61px">2</div>
<div class="ct cr" style="top:508px;left:546px;width:61px">3</div>
<div class="ct cr" style="top:508px;left:610px;width:61px">4</div>
<div class="ct cr" style="top:508px;left:674px;width:61px">5</div>
<div class="ct cr" style="top:528px;left:418px;width:61px">0,291115</div>
<div class="ct cr" style="top:528px;left:482px;width:61px">0,263</div>
<div class="ct cr" style="top:528px;left:546px;width:61px">0,865507</div>
<div class="ct cr" style="top:528px;left:610px;width:61px">0,941507</div>
<div class="ct cr" style="top:528px;left:674px;width:61px">0,124716</div>
<div class="ct cr" style="top:548px;left:418px;width:61px">0,123404</div>
<div class="ct cr" style="top:548px;left:482px;width:61px">0,13356</div>
<div class="ct cr" style="top:548px;left:546px;width:61px">0,014444</div>
<div class="ct cr" style="top:548px;left:610px;width:61px">0,006027</div>
<div class="ct cr" style="top:548px;left:674px;width:61px">0,208171</div>
<div class="ct cr" style="top:568px;left:418px;width:61px">0,225006</div>
<div class="ct cr" style="top:568px;left:482px;width:61px">0,538842</div>
<div class="ct cr" style="top:568px;left:546px;width:61px">0,155059</div>
<div class="ct cr" style="top:568px;left:610px;width:61px">0,116576</div>
<div class="ct cr" style="top:568px;left:674px;width:61px">0,359086</div>
<div class="ct cr" style="top:588px;left:418px;width:61px">0,348409</div>
<div class="ct cr" style="top:588px;left:482px;width:61px">0,672403</div>
<div class="ct cr" style="top:588px;left:546px;width:61px">0,169503</div>
<div class="ct cr" style="top:588px;left:610px;width:61px">0,122603</div>
<div class="ct cr" style="top:588px;left:674px;width:61px">0,567257</div>
<div class="ct cr" style="top:608px;left:418px;width:61px">0</div>
<div class="ct cr" style="top:608px;left:482px;width:61px">1</div>
<div class="ct cr" style="top:608px;left:546px;width:61px">1</div>
<div class="ct cr" style="top:608px;left:610px;width:61px">1</div>
<div class="ct cr" style="top:608px;left:674px;width:61px">0</div>
<div class="ct cr" style="top:628px;left:418px;width:61px">0</div>
<div class="ct cr" style="top:628px;left:482px;width:61px">0,342562</div>
<div class="ct cr" style="top:628px;left:546px;width:61px">0,813859</div>
<div class="ct cr" style="top:628px;left:610px;width:61px">0,024537</div>
<div class="ct cr" style="top:628px;left:674px;width:61px">0</div>
<div class="ct cr" style="top:648px;left:418px;width:61px">0</div>
<div class="ct cr" style="top:648px;left:482px;width:61px">0,476122</div>
<div class="ct cr" style="top:648px;left:546px;width:61px">0,828303</div>
<div class="ct cr" style="top:648px;left:610px;width:61px">0,030565</div>
<div class="ct cr" style="top:648px;left:674px;width:61px">0,208171</div>
<div class="ct cr" style="top:668px;left:418px;width:61px">0</div>
<div class="ct cr" style="top:668px;left:482px;width:61px">0</div>
<div class="ct cr" style="top:668px;left:546px;width:61px">1</div>
<div class="ct cr" style="top:668px;left:610px;width:61px">1</div>
<div class="ct cr" style="top:668px;left:674px;width:61px">0</div>
<div class="ct cr" style="top:688px;left:418px;width:61px">0</div>
<div class="ct cr" style="top:688px;left:482px;width:61px">0</div>
<div class="a" style="left:417px;top:466px;width:65px;height:21px;border:1px solid #9900cc"></div><div class="a" style="left:416px;top:465px;width:5px;height:5px;background:#9900cc"></div><div class="a" style="left:478px;top:465px;width:5px;height:5px;background:#9900cc"></div><div class="a" style="left:416px;top:483px;width:5px;height:5px;background:#9900cc"></div><div class="a" style="left:478px;top:483px;width:5px;height:5px;background:#9900cc"></div>
<div class="a" style="left:545px;top:546px;width:65px;height:21px;border:1px solid #008000"></div><div class="a" style="left:544px;top:545px;width:5px;height:5px;background:#008000"></div><div class="a" style="left:606px;top:545px;width:5px;height:5px;background:#008000"></div><div class="a" style="left:544px;top:563px;width:5px;height:5px;background:#008000"></div><div class="a" style="left:606px;top:563px;width:5px;height:5px;background:#008000"></div>
<div class="a" style="left:481px;top:646px;width:65px;height:21px;border:1px solid #0000ff"></div><div class="a" style="left:480px;top:645px;width:5px;height:5px;background:#0000ff"></div><div class="a" style="left:542px;top:645px;width:5px;height:5px;background:#0000ff"></div><div class="a" style="left:480px;top:663px;width:5px;height:5px;background:#0000ff"></div><div class="a" style="left:542px;top:663px;width:5px;height:5px;background:#0000ff"></div>
<div class="a" style="left:546px;top:687px;width:191px;height:19px;background:#fff"></div>
<div class="a" style="left:544px;top:685px;width:67px;height:23px;border:2px solid #000;border-right:none"></div>
<div class="a" style="left:589px;top:687px;width:2px;height:19px;background:#000"></div>
<div class="a" style="left:606px;top:705px;width:5px;height:5px;background:#000;border-top:1px solid #fff;border-left:1px solid #fff"></div>
<div class="ct" style="left:548px;top:688px;letter-spacing:-.23px"><span style="letter-spacing:-.77px">=ЕСЛИ</span><span style="margin-left:2.500px">(</span><span style="color:#1f1fe0">C15</span>-<span style="color:#1f8a1f">D10</span>&gt;<span style="color:#a020c8">$B$6</span>;1;0)</div><!-- vertical scrollbar -->
<div class="a" style="left:745px;top:167px;width:16px;height:687px;background:linear-gradient(90deg,#e4e7eb,#eef0f3 50%,#e1e4e8)"></div>
<div class="a" style="left:745px;top:168px;width:15px;height:7px;border:1px solid #9aa0a8;background:#fff"></div>
<div class="a" style="left:749px;top:170px;width:8px;height:1px;background:#6a6a6a"></div>
<div class="a" style="left:745px;top:176px;width:15px;height:16px;border:1px solid #aab0b7;border-radius:2px;background:linear-gradient(180deg,#f7f8f9,#e3e6ea)"></div>
<svg style="left:749px;top:181px" width="9" height="5" viewBox="0 0 9 5"><path d="M0 5 H9 L4.500 0Z" fill="#4a4a4a"/></svg>
<div class="a" style="left:745px;top:193px;width:15px;height:617px;border:1px solid #9aa3b0;border-radius:2px;background:linear-gradient(90deg,#fdfdfe,#f1f3f6 45%,#e2e5ea);box-shadow:inset 0 0 0 1px rgba(255,255,255,.8)"></div>
<svg style="left:749px;top:497px" width="8" height="8" viewBox="0 0 8 8"><path d="M0 .5 H8 M0 2.500 H8 M0 4.500 H8 M0 6.500 H8" stroke="#858a91"/></svg>
<div class="a" style="left:745px;top:837px;width:15px;height:17px;border:1px solid #aab0b7;border-radius:2px;background:linear-gradient(180deg,#f7f8f9,#e3e6ea)"></div>
<svg style="left:749px;top:843px" width="9" height="5" viewBox="0 0 9 5"><path d="M0 0 H9 L4.500 5Z" fill="#4a4a4a"/></svg>
<!-- sheet tab bar -->
<div class="a" style="left:8px;top:854px;width:753px;height:15px;background:#dfe3e8"></div>
<div class="a" style="left:8px;top:854px;width:753px;height:1px;background:#9aa0a8"></div>
<div class="a" style="left:8px;top:868px;width:753px;height:1px;background:#f4f5f7"></div><div class="a" style="left:8px;top:869px;width:753px;height:1px;background:#7f858c"></div>
<svg style="left:13px;top:858px" width="52" height="8" viewBox="0 0 52 8" fill="#4a4f57"><rect x="1" y="0" width="1.500" height="8"/><path d="M7 0 V8 L2.500 4Z"/><path d="M21 0 V8 L16.500 4Z"/><path d="M31 0 V8 L35.500 4Z"/><path d="M45 0 V8 L49.500 4Z"/><rect x="49.500" y="0" width="1.500" height="8"/></svg>
<svg style="left:48px;top:854px" width="300" height="16" viewBox="0 0 300 16">
<path d="M22.500 15.500 V2.500 Q22.500 .5 24.500 .5 H99.500 Q101.500 .5 101.500 2.500 V15.500" fill="#eceff2" stroke="#9aa0a8"/>
<path d="M172 15.500 L183 .5 H254 L243 15.500" fill="#e6e9ed" stroke="#9aa0a8"/>
<path d="M243 15.500 L254 .5 H288 L277 15.500" fill="#e6e9ed" stroke="#9aa0a8"/>
<path d="M99 0 H183 L172.500 15.500 H101.500 Z" fill="#fff"/>
<path d="M101.500 0 V13 L103.500 15.500 H172 L183 .5" fill="none" stroke="#9aa0a8"/>
</svg>
<div class="t" style="left:83px;top:856px;font-size:11.500px;color:#3f3f3f;letter-spacing:.23px">Задача 1</div>
<div class="t" style="left:157px;top:856px;font-size:12.500px;font-weight:bold;color:#222;letter-spacing:.45px">Задача 2</div>
<div class="t" style="left:234px;top:856px;font-size:11.500px;color:#3f3f3f;letter-spacing:.23px">Задача 3</div>
<svg style="left:306px;top:856px" width="16" height="12" viewBox="0 0 16 12"><rect x="3.500" y="2.500" width="10" height="7" rx="1" fill="#fff" stroke="#5b76a8"/><path d="M5 9.500 V11.500 H8" stroke="#5b76a8" fill="none"/><path d="M3 0 L4 2 L6 3 L4 4 L3 6 L2 4 L0 3 L2 2Z" fill="#f0b020"/></svg>
<!-- horizontal scrollbar -->
<div class="a" style="left:450px;top:855px;width:8px;height:14px;border:1px solid #8f959d;background:#fff"></div>
<div class="a" style="left:453px;top:858px;width:1px;height:8px;background:#5a5a5a"></div>
<div class="a" style="left:458px;top:855px;width:279px;height:14px;background:linear-gradient(180deg,#e4e7eb,#eef0f3 50%,#e1e4e8)"></div>
<svg style="left:463px;top:858px" width="5" height="9" viewBox="0 0 5 9"><path d="M5 0 V9 L0 4.500Z" fill="#3a3a3a"/></svg>
<div class="a" style="left:475px;top:855px;width:51px;height:14px;border:1px solid #a6acb4;border-radius:2px;background:linear-gradient(180deg,#f9fafb,#eef0f3 45%,#dfe3e8)"></div>
<svg style="left:497px;top:859px" width="8" height="7" viewBox="0 0 8 7"><path d="M.5 0 V7 M2.500 0 V7 M4.500 0 V7 M6.500 0 V7" stroke="#7a8088"/></svg>
<svg style="left:727px;top:858px" width="5" height="9" viewBox="0 0 5 9"><path d="M0 0 V9 L5 4.500Z" fill="#3a3a3a"/></svg>
<div class="a" style="left:737px;top:855px;width:8px;height:14px;border:1px solid #8f959d;background:#fff"></div>
<div class="a" style="left:740px;top:858px;width:1px;height:8px;background:#5a5a5a"></div>
<div class="a" style="left:745px;top:855px;width:16px;height:14px;background:#dfe3e8"></div>
<!-- status bar -->
<div class="a" style="left:8px;top:870px;width:753px;height:22px;background:linear-gradient(180deg,#fbfbfc 0,#e9ebee 1px,#dcdfe3 50%,#c5c9cf 100%)"></div>
<div class="t" style="left:16px;top:875px;font-size:11.500px;color:#2f2f2f;letter-spacing:.36px">Правка</div>
<div class="a" style="left:64px;top:872px;width:1px;height:19px;background:#a6abb2"></div><div class="a" style="left:65px;top:872px;width:1px;height:19px;background:#f4f5f7"></div>
<div class="a" style="left:503px;top:872px;width:1px;height:19px;background:#a6abb2"></div><div class="a" style="left:504px;top:872px;width:1px;height:19px;background:#f4f5f7"></div>
<svg style="left:512px;top:874px" width="52" height="14" viewBox="0 0 52 14" fill="none" stroke="#50545b"><rect x=".5" y="1.500" width="12" height="10" fill="#f6f7f8"/><path d="M.5 4.500 H12.500 M.5 8.500 H12.500 M4.500 1.500 V11.500 M8.500 1.500 V11.500"/><rect x="18.500" y="1.500" width="13" height="11" fill="#d4d7dc"/><rect x="21.500" y="4.500" width="7" height="6" fill="#f6f7f8"/><rect x="37.500" y="1.500" width="12" height="11" fill="#f0f1f3"/><path d="M41.500 1.500 V8.500 H45.500 V1.500 M37.500 8.500 H49.500" /><rect x="38" y="2" width="7" height="6" fill="#c9ccd2" stroke="none"/><path d="M41.500 1.500 V8.500" /></svg>
<div class="t" style="left:574px;top:875px;font-size:11.500px;color:#8d8d8d;letter-spacing:-.1px">100%</div>
<svg style="left:609.500px;top:871px" width="135" height="18" viewBox="0 0 135 18"><path d="M17 9.500 H115" stroke="#9a9fa6"/><path d="M17 10.500 H115" stroke="#f4f5f7"/><path d="M66.500 5.500 V13" stroke="#9a9fa6"/><circle cx="9" cy="9" r="7.500" fill="#eff0f2" stroke="#b9bdc3"/><path d="M5 9 H13" stroke="#c2c6cc" stroke-width="2"/><circle cx="123.500" cy="9" r="7.500" fill="#eff0f2" stroke="#b9bdc3"/><path d="M119.500 9 H127.500 M123.500 5 V13" stroke="#c2c6cc" stroke-width="2"/></svg>
<svg style="left:749px;top:880px" width="11" height="11" viewBox="0 0 11 11" fill="#9a9fa6"><rect x="8" y="0" width="2" height="2"/><rect x="4" y="4" width="2" height="2"/><rect x="8" y="4" width="2" height="2"/><rect x="0" y="8" width="2" height="2"/><rect x="4" y="8" width="2" height="2"/><rect x="8" y="8" width="2" height="2"/></svg>
<div class="a" style="left:361px;top:709px;width:407px;height:18px;background:linear-gradient(180deg,#fff 0,#fbfbfd 50%,#ebebf5 100%);border:1px solid #7a7a7a;border-radius:3px;box-shadow:1px 1px 2px rgba(0,0,0,.3)"></div><div class="t" style="left:367px;top:711px;font-size:12px;line-height:14px;color:#3a3a3a;letter-spacing:-.14px"><b style="color:#222;letter-spacing:-.6px">ЕСЛИ</b>(лог_выражение; [значение_если_истина]; [значение_если_ложь])</div></div></body></html>
